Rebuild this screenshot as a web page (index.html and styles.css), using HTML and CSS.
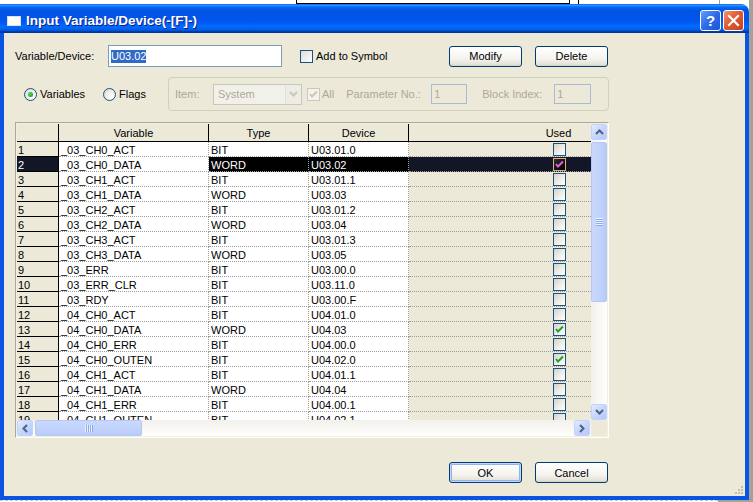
FILE: index.html
```html
<!DOCTYPE html>
<html>
<head>
<meta charset="utf-8">
<title>Input Variable/Device</title>
<link rel="stylesheet" href="styles.css">
</head>
<body>
<div class="desk">
  <div class="bgwin"></div>
  <div class="bgline1"></div>
  <div class="bgline2"></div>
  <div class="desk-right"></div>
  <div class="desk-bottom"></div>
  <div class="desk-bottom-gray"></div>

  <div class="dialog">
    <div class="titlebar">
      <span class="ticon"></span>
      <span class="ttext">Input Variable/Device(-[F]-)</span>
      <span class="tspacer"></span>
      <span class="tbtn help">?</span>
      <span class="tbtn close"><svg width="13" height="13" viewBox="0 0 13 13"><path d="M2 2 L11 11 M11 2 L2 11" stroke="#fff" stroke-width="2.2" stroke-linecap="square"/></svg></span>
    </div>
    <div class="frame">
      <div class="row1">
        <span class="lbl">Variable/Device:</span>
        <div class="txt"><span class="sel">U03.02</span></div>
        <div class="chk-wrap"><span class="cb"></span><span>Add to Symbol</span></div>
        <div class="btns">
          <button class="btn">Modify</button>
          <button class="btn">Delete</button>
        </div>
      </div>

      <div class="row2">
        <div class="radio r-var"><span class="rb on"><span class="dot"></span></span><span>Variables</span></div>
        <div class="radio r-flag"><span class="rb"></span><span>Flags</span></div>
        <div class="group">
          <span class="g-item dis">Item:</span>
          <div class="combo"><span class="combo-val">System</span><span class="combo-btn"><svg width="9" height="6" viewBox="0 0 9 6"><path d="M1 1 L4.5 4.5 L8 1" fill="none" stroke="#C9C7BA" stroke-width="2"/></svg></span></div>
          <div class="all"><span class="cb dis-cb"><svg width="11" height="11" viewBox="0 0 11 11"><path d="M2 5 L4 7.5 L9 2.5" fill="none" stroke="#C9C7BA" stroke-width="2"/></svg></span><span class="dis">All</span></div>
          <span class="g-param dis">Parameter No.:</span>
          <div class="dinput p-in dis">1</div>
          <span class="g-block dis">Block Index:</span>
          <div class="dinput b-in dis">1</div>
        </div>
      </div>

      <div class="grid">
        <div class="gdata">
          <div class="grow ghead">
            <div class="c0"></div><div class="c1">Variable</div><div class="c2">Type</div><div class="c3">Device</div><div class="c4">Used</div>
          </div>
          <div class="grow"><div class="c0">1</div><div class="c1">_03_CH0_ACT</div><div class="c2">BIT</div><div class="c3">U03.01.0</div><div class="c4"><span class="gcb"></span></div></div>
          <div class="grow selrow"><div class="c0">2</div><div class="c1">_03_CH0_DATA</div><div class="c2">WORD</div><div class="c3">U03.02</div><div class="c4"><span class="gcb"><svg width="11" height="11" viewBox="0 0 11 11"><path d="M2 5 L4 7.5 L9 2.5" fill="none" stroke-width="2"/></svg></span></div></div>
          <div class="grow"><div class="c0">3</div><div class="c1">_03_CH1_ACT</div><div class="c2">BIT</div><div class="c3">U03.01.1</div><div class="c4"><span class="gcb"></span></div></div>
          <div class="grow"><div class="c0">4</div><div class="c1">_03_CH1_DATA</div><div class="c2">WORD</div><div class="c3">U03.03</div><div class="c4"><span class="gcb"></span></div></div>
          <div class="grow"><div class="c0">5</div><div class="c1">_03_CH2_ACT</div><div class="c2">BIT</div><div class="c3">U03.01.2</div><div class="c4"><span class="gcb"></span></div></div>
          <div class="grow"><div class="c0">6</div><div class="c1">_03_CH2_DATA</div><div class="c2">WORD</div><div class="c3">U03.04</div><div class="c4"><span class="gcb"></span></div></div>
          <div class="grow"><div class="c0">7</div><div class="c1">_03_CH3_ACT</div><div class="c2">BIT</div><div class="c3">U03.01.3</div><div class="c4"><span class="gcb"></span></div></div>
          <div class="grow"><div class="c0">8</div><div class="c1">_03_CH3_DATA</div><div class="c2">WORD</div><div class="c3">U03.05</div><div class="c4"><span class="gcb"></span></div></div>
          <div class="grow"><div class="c0">9</div><div class="c1">_03_ERR</div><div class="c2">BIT</div><div class="c3">U03.00.0</div><div class="c4"><span class="gcb"></span></div></div>
          <div class="grow"><div class="c0">10</div><div class="c1">_03_ERR_CLR</div><div class="c2">BIT</div><div class="c3">U03.11.0</div><div class="c4"><span class="gcb"></span></div></div>
          <div class="grow"><div class="c0">11</div><div class="c1">_03_RDY</div><div class="c2">BIT</div><div class="c3">U03.00.F</div><div class="c4"><span class="gcb"></span></div></div>
          <div class="grow"><div class="c0">12</div><div class="c1">_04_CH0_ACT</div><div class="c2">BIT</div><div class="c3">U04.01.0</div><div class="c4"><span class="gcb"></span></div></div>
          <div class="grow"><div class="c0">13</div><div class="c1">_04_CH0_DATA</div><div class="c2">WORD</div><div class="c3">U04.03</div><div class="c4"><span class="gcb"><svg width="11" height="11" viewBox="0 0 11 11"><path d="M2 5 L4 7.5 L9 2.5" fill="none" stroke-width="2"/></svg></span></div></div>
          <div class="grow"><div class="c0">14</div><div class="c1">_04_CH0_ERR</div><div class="c2">BIT</div><div class="c3">U04.00.0</div><div class="c4"><span class="gcb"></span></div></div>
          <div class="grow"><div class="c0">15</div><div class="c1">_04_CH0_OUTEN</div><div class="c2">BIT</div><div class="c3">U04.02.0</div><div class="c4"><span class="gcb"><svg width="11" height="11" viewBox="0 0 11 11"><path d="M2 5 L4 7.5 L9 2.5" fill="none" stroke-width="2"/></svg></span></div></div>
          <div class="grow"><div class="c0">16</div><div class="c1">_04_CH1_ACT</div><div class="c2">BIT</div><div class="c3">U04.01.1</div><div class="c4"><span class="gcb"></span></div></div>
          <div class="grow"><div class="c0">17</div><div class="c1">_04_CH1_DATA</div><div class="c2">WORD</div><div class="c3">U04.04</div><div class="c4"><span class="gcb"></span></div></div>
          <div class="grow"><div class="c0">18</div><div class="c1">_04_CH1_ERR</div><div class="c2">BIT</div><div class="c3">U04.00.1</div><div class="c4"><span class="gcb"></span></div></div>
          <div class="grow"><div class="c0">19</div><div class="c1">_04_CH1_OUTEN</div><div class="c2">BIT</div><div class="c3">U04.02.1</div><div class="c4"><span class="gcb"></span></div></div>
        </div>

        <div class="vscroll">
          <div class="sbtn"><svg width="9" height="6" viewBox="0 0 9 6"><path d="M1 5 L4.5 1.5 L8 5" fill="none" stroke="#4D6185" stroke-width="2"/></svg></div>
          <div class="vthumb"><span class="vgrip"></span></div>
          <div class="vtrack"></div>
          <div class="sbtn"><svg width="9" height="6" viewBox="0 0 9 6"><path d="M1 1 L4.5 4.5 L8 1" fill="none" stroke="#4D6185" stroke-width="2"/></svg></div>
        </div>
        <div class="hscroll">
          <div class="sbtn"><svg width="6" height="9" viewBox="0 0 6 9"><path d="M5 1 L1.5 4.5 L5 8" fill="none" stroke="#4D6185" stroke-width="2"/></svg></div>
          <div class="hthumb"><span class="hgrip"></span></div>
          <div class="htrack"></div>
          <div class="sbtn"><svg width="6" height="9" viewBox="0 0 6 9"><path d="M1 1 L4.5 4.5 L1 8" fill="none" stroke="#4D6185" stroke-width="2"/></svg></div>
        </div>
        <div class="corner"></div>
      </div>

      <div class="bottom">
        <button class="btn default">OK</button>
        <button class="btn">Cancel</button>
      </div>

      <svg class="grip" width="11" height="11" viewBox="0 0 11 11">
        <rect x="8" y="2" width="2" height="2" fill="#C1BEB1"/>
        <rect x="5" y="5" width="2" height="2" fill="#C1BEB1"/>
        <rect x="8" y="5" width="2" height="2" fill="#C1BEB1"/>
        <rect x="2" y="8" width="2" height="2" fill="#C1BEB1"/>
        <rect x="5" y="8" width="2" height="2" fill="#C1BEB1"/>
        <rect x="8" y="8" width="2" height="2" fill="#C1BEB1"/>
      </svg>
    </div>
  </div>
</div>
</body>
</html>
```
FILE: styles.css
```css
* { box-sizing: border-box; }
html, body { margin: 0; padding: 0; }
body {
  width: 753px;
  height: 502px;
  overflow: hidden;
  background: #fff;
  font-family: "Liberation Sans", Arial, sans-serif;
  font-size: 11px;
  color: #000;
}
.desk { position: relative; width: 753px; height: 502px; background: #fff; overflow: hidden; }
.bgwin { position: absolute; left: 296px; top: -6px; width: 274px; height: 10px; border: 1px solid #000; background: #fff; }
.bgline1 { position: absolute; left: 578px; top: 0; width: 1px; height: 4px; background: #000; }
.bgline2 { position: absolute; left: 719px; top: 0; width: 1px; height: 4px; background: #A0A0A0; }
.desk-right { position: absolute; left: 749px; top: 0; width: 4px; height: 502px; background: #A5A29A; }
.desk-bottom { position: absolute; left: 0; top: 500px; width: 718px; height: 2px; border-top: 1px dashed #C8C8C8; }
.desk-bottom-gray { position: absolute; left: 718px; top: 500px; width: 35px; height: 2px; background: #A5A29A; }

.dialog {
  position: absolute;
  left: 0;
  top: 4px;
  width: 749px;
  height: 496px;
  display: flex;
  flex-direction: column;
}
.titlebar {
  flex: none;
  height: 29px;
  display: flex;
  align-items: flex-start;
  padding: 0 5px 0 7px;
  border-radius: 0 8px 0 0;
  color: #fff;
  background: linear-gradient(to bottom, #0058EE 0%, #3593FF 4%, #288EFF 6%, #127DFF 8%, #036FFC 10%, #0262EE 14%, #0057E5 20%, #0054E3 24%, #0055EB 56%, #005BF5 66%, #026AFE 76%, #0062EF 86%, #0052D6 92%, #0040AB 94%, #003092 100%);
}
.ticon { width: 14px; height: 10px; background: #fff; border: 1px solid #D8E4F8; margin-right: 5px; margin-top: 12px; }
.ttext { font-weight: bold; font-size: 13.5px; line-height: 15px; margin-top: 9px; text-shadow: 1px 1px 0 #0A1E8C; }
.tspacer { flex: 1; }
.tbtn {
  width: 21px; height: 21px;
  border: 1px solid #fff;
  border-radius: 3px;
  display: flex; align-items: center; justify-content: center;
  margin-top: 6px;
}
.help {
  background: linear-gradient(135deg, #6A9EF8 0%, #2C6BEA 50%, #1D55D6 100%);
  font-weight: bold; font-size: 15px; color: #fff;
  margin-right: 2px;
}
.close { background: linear-gradient(135deg, #F1946F 0%, #E25A30 45%, #C8421F 100%); }

.frame {
  flex: 1;
  position: relative;
  display: flex;
  flex-direction: column;
  background: #ECE9D8;
  border: 4px solid #0A54E4;
  border-top: 0;
  padding: 12px 0 0 11px;
}

.row1 { display: flex; align-items: center; height: 22px; width: 593px; }
.lbl { width: 93px; }
.txt {
  width: 174px; height: 22px;
  border: 1px solid #7F9DB9;
  background: #fff;
  padding: 0 2px;
  display: flex; align-items: center;
}
.sel { background: #316AC5; color: #fff; line-height: 13px; }
.chk-wrap { display: flex; align-items: center; margin-left: 18px; gap: 3px; }
.cb {
  width: 13px; height: 13px;
  border: 1px solid #1C5180;
  background: linear-gradient(135deg, #DCDCD7, #FFFFFF);
  display: inline-flex; align-items: center; justify-content: center;
}
.btns { margin-left: auto; display: flex; gap: 13px; }
.btn {
  width: 73px; height: 21px;
  border: 1px solid #003C74;
  border-radius: 3px;
  background: linear-gradient(to bottom, #FFFFFF 0%, #F5F4EF 60%, #E6E3D9 90%, #D6D0C5 100%);
  font-family: "Liberation Sans", Arial, sans-serif;
  font-size: 11px;
  color: #000;
  padding: 0;
}
.btn.default { box-shadow: inset 0 0 0 1px #C3D7F7, inset 0 0 0 2px #93B1EA; }

.row2 { display: flex; align-items: center; height: 34px; margin-top: 10px; }
.radio { display: flex; align-items: center; gap: 3px; }
.r-var { padding-left: 9px; width: 88px; }
.r-flag { width: 65px; }
.rb {
  width: 13px; height: 13px;
  border-radius: 50%;
  border: 1px solid #1C5180;
  background: radial-gradient(circle at 70% 70%, #FFFFFF 0%, #F2F1EC 40%, #D4D3CC 100%);
  display: inline-flex; align-items: center; justify-content: center;
}
.dot { width: 5px; height: 5px; border-radius: 50%; background: radial-gradient(circle at 40% 40%, #5EDC5E, #21A121 70%); }

.group {
  width: 441px; height: 34px;
  border: 1px solid #D0D0BF;
  border-radius: 4px;
  display: flex; align-items: center;
  padding-left: 6px;
}
.dis { color: #ACA899; }
.g-item { width: 38px; }
.combo {
  width: 89px; height: 21px;
  border: 1px solid #C9C7BA;
  background: #F2F1E9;
  display: flex; align-items: center;
}
.combo-val { flex: 1; padding-left: 4px; color: #ACA899; }
.combo-btn {
  width: 16px; height: 19px;
  background: #EEEDE5;
  border-left: 1px solid #E2E0D5;
  display: flex; align-items: center; justify-content: center;
}
.all { display: flex; align-items: center; gap: 2px; margin-left: 5px; }
.dis-cb { border-color: #CAC8BB; background: #F4F3EE; }
.g-param { margin-left: 12px; width: 85px; }
.dinput {
  height: 20px;
  border: 1px solid #A9BDD2;
  padding-left: 2px;
  display: flex; align-items: center;
}
.p-in { width: 36px; }
.g-block { margin-left: 15px; width: 72px; }
.b-in { width: 37px; }

.grid {
  margin-top: 11px;
  width: 594px; height: 316px;
  border: 1px solid;
  border-color: #ACA899 #FFFFFF #FFFFFF #ACA899;
  padding: 1px;
  background: #F1EFE2;
  display: grid;
  grid-template-columns: 574px 16px;
  grid-template-rows: 296px 16px;
}
.gdata { overflow: hidden; background: #ECE9D8; }
.grow { display: flex; height: 15px; line-height: 14px; white-space: nowrap; }
.grow > div { flex: none; height: 15px; overflow: hidden; padding-top: 1px; }
.c0 { width: 42px; background: #ECE9D8; border-right: 1px solid #000; border-bottom: 1px solid #000; padding-left: 1px; }
.c1 { width: 150px; background: #fff; border-right: 1px dotted #9C9C9C; border-bottom: 1px dotted #9C9C9C; padding-left: 2px; }
.c2 { width: 100px; background: #fff; border-right: 1px dotted #9C9C9C; border-bottom: 1px dotted #9C9C9C; padding-left: 2px; }
.c3 { width: 100px; background: #fff; border-right: 1px dotted #9C9C9C; border-bottom: 1px dotted #9C9C9C; padding-left: 2px; }
.grow > .c4 { width: 300px; background: #ECE9D8; border-bottom: 1px dotted #9C9C9C; display: flex; justify-content: center; align-items: center; padding-top: 0; }

.ghead { height: 18px; line-height: 17px; }
.ghead > div { height: 18px; background: #ECE9D8; border-right: 1px solid #000; border-bottom: 1px solid #000; text-align: center; padding-left: 0; padding-top: 1px; }
.ghead > .c4 { display: block; padding-top: 1px; background: #ECE9D8; border-bottom: 1px solid #000; }

.gcb {
  width: 13px; height: 13px;
  border: 1px solid #1C5180;
  background: linear-gradient(135deg, #D3D2CA 0%, #ECEBE5 50%, #FFFFFF 100%);
  display: flex; align-items: center; justify-content: center;
}
.gcb svg path { stroke: #21A121; }

.selrow .c0 { background: #131627; color: #fff; }
.selrow .c2, .selrow .c3 { background: #000; color: #fff; }
.selrow > .c4 { background: #131627; }
.selrow .gcb { border-color: #E3AE7F; background: linear-gradient(135deg, #2C2D35 0%, #131418 50%, #000 100%); }
.selrow .gcb svg path { stroke: #DE5EDE; }

.vscroll {
  display: flex; flex-direction: column;
  background: linear-gradient(to right, #F3F1EC, #FEFEFB);
}
.hscroll {
  display: flex;
  background: linear-gradient(to bottom, #F3F1EC, #FEFEFB);
}
.corner { background: #ECE9D8; }
.sbtn {
  flex: none;
  width: 16px; height: 16px;
  border: 1px solid #C3D3FD;
  border-radius: 2px;
  background: linear-gradient(135deg, #E2EBFE 0%, #C6D6FD 50%, #B4C8FA 100%);
  display: flex; align-items: center; justify-content: center;
}
.vthumb {
  flex: none;
  height: 160px;
  margin-top: 2px;
  border: 1px solid #B5C8F5;
  border-radius: 2px;
  background: linear-gradient(to right, #C9D8FD, #C2D3FC 50%, #B8CBF9);
  display: flex; align-items: center; justify-content: center;
}
.vtrack { flex: 1; }
.vgrip {
  width: 7px; height: 8px;
  background: repeating-linear-gradient(to bottom, #EEF3FE 0px, #EEF3FE 1px, #8CA9EF 1px, #8CA9EF 2px);
}
.hthumb {
  flex: none;
  width: 107px;
  margin-left: 2px;
  border: 1px solid #B5C8F5;
  border-radius: 2px;
  background: linear-gradient(to bottom, #C9D8FD, #C2D3FC 50%, #B8CBF9);
  display: flex; align-items: center; justify-content: center;
}
.htrack { flex: 1; }
.hscroll .sbtn:last-child { margin-right: 1px; }
.hgrip {
  width: 8px; height: 7px;
  background: repeating-linear-gradient(to right, #EEF3FE 0px, #EEF3FE 1px, #8CA9EF 1px, #8CA9EF 2px);
}

.bottom {
  margin-top: 24px;
  width: 593px;
  display: flex;
  justify-content: flex-end;
  gap: 13px;
}
.grip { position: absolute; right: 1px; bottom: 1px; }
```
